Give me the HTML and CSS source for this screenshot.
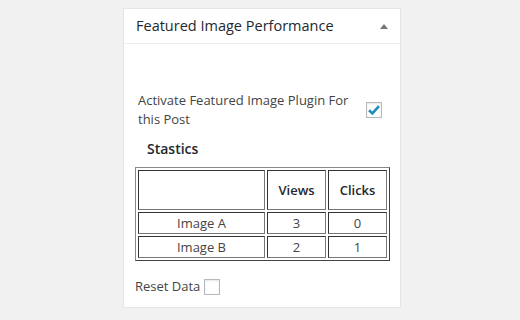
FILE: index.html
```html
<!DOCTYPE html>
<html lang="en">
<head>
    <meta charset="UTF-8">
    <title>Featured Image Performance</title>
    <link rel="stylesheet" href="styles.css">
</head>
<body>
    <div class="postbox">
        <div class="postbox-header">
            <h2 class="hndle">Featured Image Performance</h2>
            <span class="toggle-arrow"></span>
        </div>
        <div class="inside">
            <div class="activate-row">
                <label class="activate-label">Activate Featured Image Plugin For this Post</label>
                <span class="fake-check checked">
                    <svg width="14" height="14" viewBox="0 0 14 14"><path d="M2 7.2 L5.4 10.4 L12 3.2" fill="none" stroke="#1e8cbe" stroke-width="2.6" stroke-linejoin="miter"/></svg>
                </span>
            </div>

            <h4 class="stats-title">Stastics</h4>
            <table class="stats-table">
                <tr>
                    <th class="col-name"></th>
                    <th class="col-views">Views</th>
                    <th class="col-clicks">Clicks</th>
                </tr>
                <tr>
                    <td>Image A</td>
                    <td>3</td>
                    <td>0</td>
                </tr>
                <tr>
                    <td>Image B</td>
                    <td>2</td>
                    <td>1</td>
                </tr>
            </table>

            <div class="reset-row">
                <label>Reset Data</label>
                <span class="fake-check"></span>
            </div>
        </div>
    </div>
</body>
</html>
```

FILE: styles.css
```css
body {
    margin: 0;
    background: #f1f1f1;
    font-family: "Open Sans", "Liberation Sans", sans-serif;
    font-size: 13px;
    color: #444;
}

.postbox {
    margin: 8px 0 0 123px;
    width: 276px;
    background: #fff;
    border: 1px solid #e5e5e5;
    box-shadow: 0 1px 1px rgba(0, 0, 0, 0.04);
}

.postbox-header {
    display: flex;
    justify-content: space-between;
    align-items: center;
    border-bottom: 1px solid #eee;
}

.hndle {
    margin: 0;
    padding: 8px 12px;
    font-size: 14.5px;
    line-height: 18px;
    font-weight: 400;
    color: #23282d;
}

.toggle-arrow {
    width: 0;
    height: 0;
    margin-right: 12px;
    border-left: 4px solid transparent;
    border-right: 4px solid transparent;
    border-bottom: 5px solid #72777c;
}

.inside {
    padding: 47px 11px 11px 11px;
}

.activate-row {
    display: flex;
    align-items: center;
    justify-content: space-between;
    padding: 0 7px 0 3px;
}

.activate-label {
    width: 215px;
    line-height: 19px;
}

.fake-check {
    display: inline-flex;
    align-items: center;
    justify-content: center;
    box-sizing: border-box;
    width: 16px;
    height: 16px;
    border: 1px solid #b4b9be;
    background: #fff;
    box-shadow: inset 0 1px 2px rgba(0, 0, 0, 0.1);
}

.stats-title {
    margin: 11px 0 9px 12px;
    font-size: 14px;
    line-height: 18px;
    font-weight: 600;
    color: #23282d;
}

.stats-table {
    width: 255px;
    border: 1px solid #555;
    border-color: #888 #444 #444 #888;
    border-spacing: 2px;
    color: #444;
}

.stats-table th,
.stats-table td {
    border: 1px solid #333;
    border-color: #333 #777 #777 #333;
    text-align: center;
    line-height: 18px;
}

.stats-table th {
    padding: 10px 4px;
    font-weight: 600;
    color: #23282d;
}

.stats-table td {
    padding: 1px 4px;
}

.col-name {
    width: 117px;
}

.col-views {
    width: 49px;
}

.reset-row {
    display: flex;
    align-items: center;
    gap: 4px;
    margin-top: 16px;
    line-height: 19px;
}
```
